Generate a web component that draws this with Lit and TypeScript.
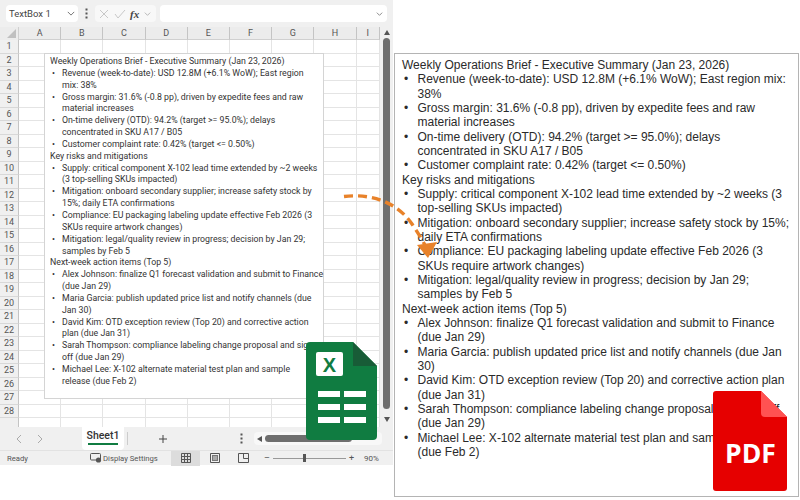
import { LitElement, html, css, svg } from "lit";
import { customElement } from "lit/decorators.js";

type Line = { t: string; b?: boolean };
const L: Line[] = [
  { t: "Weekly Operations Brief - Executive Summary (Jan 23, 2026)" },
  { t: "Revenue (week-to-date): USD 12.8M (+6.1% WoW); East region", b: true },
  { t: "mix: 38%" },
  { t: "Gross margin: 31.6% (-0.8 pp), driven by expedite fees and raw", b: true },
  { t: "material increases" },
  { t: "On-time delivery (OTD): 94.2% (target >= 95.0%); delays", b: true },
  { t: "concentrated in SKU A17 / B05" },
  { t: "Customer complaint rate: 0.42% (target <= 0.50%)", b: true },
  { t: "Key risks and mitigations" },
  { t: "Supply: critical component X-102 lead time extended by ~2 weeks", b: true },
  { t: "(3 top-selling SKUs impacted)" },
  { t: "Mitigation: onboard secondary supplier; increase safety stock by", b: true },
  { t: "15%; daily ETA confirmations" },
  { t: "Compliance: EU packaging labeling update effective Feb 2026 (3", b: true },
  { t: "SKUs require artwork changes)" },
  { t: "Mitigation: legal/quality review in progress; decision by Jan 29;", b: true },
  { t: "samples by Feb 5" },
  { t: "Next-week action items (Top 5)" },
  { t: "Alex Johnson: finalize Q1 forecast validation and submit to Finance", b: true },
  { t: "(due Jan 29)" },
  { t: "Maria Garcia: publish updated price list and notify channels (due", b: true },
  { t: "Jan 30)" },
  { t: "David Kim: OTD exception review (Top 20) and corrective action", b: true },
  { t: "plan (due Jan 31)" },
  { t: "Sarah Thompson: compliance labeling change proposal and sign-", b: true },
  { t: "off (due Jan 29)" },
  { t: "Michael Lee: X-102 alternate material test plan and sample", b: true },
  { t: "release (due Feb 2)" },
];

const R: Line[] = L.map((l) => ({ ...l }));
R[1] = { t: "Revenue (week-to-date): USD 12.8M (+6.1% WoW); East region mix:", b: true };
R[2] = { t: "38%" };
R[9] = { t: "Supply: critical component X-102 lead time extended by ~2 weeks (3", b: true };
R[10] = { t: "top-selling SKUs impacted)" };
R[11] = { t: "Mitigation: onboard secondary supplier; increase safety stock by 15%;", b: true };
R[12] = { t: "daily ETA confirmations" };
R[20] = { t: "Maria Garcia: publish updated price list and notify channels (due Jan", b: true };
R[21] = { t: "30)" };
R[22] = { t: "David Kim: OTD exception review (Top 20) and corrective action plan", b: true };
R[23] = { t: "(due Jan 31)" };
R[24] = { t: "Sarah Thompson: compliance labeling change proposal and sign-off", b: true };
R[25] = { t: "(due Jan 29)" };
R[26] = { t: "Michael Lee: X-102 alternate material test plan and sample release", b: true };
R[27] = { t: "(due Feb 2)" };

const COLS = ["A", "B", "C", "D", "E", "F", "G", "H", "I"];

@customElement("app-root")
export class AppRoot extends LitElement {
  static styles = css`
    :host { display: block; position: relative; width: 800px; height: 500px; background: #fff; overflow: hidden; font-family: Roboto, "Liberation Sans", sans-serif; color: #333; }
    .page { display: flex; width: 800px; height: 500px; align-items: flex-start; }
    .left { width: 393px; height: 465px; display: flex; flex-direction: column; background: #f0f0f0; flex: none; position: relative; }

    .fbar { height: 27px; display: flex; align-items: center; padding: 0 6px; flex: none; box-sizing: border-box; }
    .name { width: 72px; height: 17px; background: #fff; border-radius: 4px; display: flex; align-items: center; justify-content: space-between; padding: 0 3px; box-sizing: border-box; font-size: 9.5px; color: #444; }
    .vdots { width: 17px; display: flex; justify-content: center; }
    .fx { width: 61px; height: 17px; background: #f8f8f8; border-radius: 4px; display: flex; align-items: center; gap: 5px; padding: 0 4px; box-sizing: border-box; }
    .fxt { font-family: "Liberation Serif", serif; font-style: italic; font-weight: bold; font-size: 11px; color: #444; margin-left: -1px; }
    .formula { margin-left: 4px; width: 227px; height: 17px; background: #fff; border-radius: 4px; display: flex; align-items: center; justify-content: flex-end; padding-right: 4px; box-sizing: border-box; }

    .main { flex: 1; display: flex; min-height: 0; }
    .sheet { width: 380px; flex: none; overflow: hidden; display: grid; grid-template-columns: 19px repeat(8, 42.2px) 23.4px; grid-auto-rows: 13.5px; grid-template-rows: 13px; align-content: start; background: #fff; }
    .corner { background: #ececec; position: relative; border-right: 1px solid #d0d0d0; box-sizing: border-box; }
    .tri { position: absolute; right: 2px; bottom: 2px; width: 0; height: 0; border-left: 9px solid transparent; border-bottom: 9px solid #c0c0c0; }
    .ch { background: #ececec; border-right: 1px solid #c4c4c4; border-bottom: 1px solid #d0d0d0; font-size: 9px; text-align: center; line-height: 12px; color: #555; box-sizing: border-box; }
    .rh { background: #f0f0f0; border-right: 1px solid #c4c4c4; border-bottom: 1px solid #d8d8d8; font-size: 9px; text-align: center; line-height: 13px; color: #555; box-sizing: border-box; }
    .c { border-right: 1px solid #e4e4e4; border-bottom: 1px solid #e4e4e4; box-sizing: border-box; }
    .vs { flex: 1; position: relative; display: flex; flex-direction: column; align-items: center; padding-top: 3px; box-sizing: border-box; }
    .vthumb { width: 7px; height: 371px; margin-top: 3px; background: #6e6e6e; border-radius: 4px; }
    .arr { width: 0; height: 0; border-left: 3.5px solid transparent; border-right: 3.5px solid transparent; }
    .up { border-bottom: 5px solid #555; }
    .down { border-top: 5px solid #555; margin-top: 8px; }

    .box { position: absolute; left: 44px; top: 53px; width: 280px; height: 346px; background: #fff; border: 1px solid #d4d4d4; box-sizing: border-box; padding: 2px 5px; font-size: 8.78px; line-height: 11.85px; color: #333; white-space: nowrap; }
    .ln { display: block; height: 11.85px; }
    .ind { padding-left: 12px; position: relative; display: block; }
    .bul { position: absolute; left: 2px; }

    .tabs { height: 23px; flex: none; display: flex; align-items: center; position: relative; }
    .navs { width: 82px; display: flex; gap: 15px; padding-left: 16px; box-sizing: border-box; }
    .tab { width: 42px; height: 23px; background: #fff; border-radius: 0 0 4px 4px; font-size: 10.5px; font-weight: 500; color: #333; display: flex; flex-direction: column; align-items: center; padding-top: 2px; box-sizing: border-box; }
    .tab i { width: 30px; height: 1.5px; background: #107c41; margin-top: 1px; display: block; }
    .sep { width: 1px; height: 13px; background: #ccc; margin-left: 3px; }
    .plus { margin-left: 30px; width: 10px; }
    .tdots { margin-left: 66px; width: 14px; display: flex; justify-content: center; }
    .hs { margin-left: 6px; width: 128px; height: 13px; background: #f8f8f8; border-radius: 4px; display: flex; align-items: center; padding-left: 3px; gap: 3px; box-sizing: border-box; }
    .hl { width: 0; height: 0; border-top: 3px solid transparent; border-bottom: 3px solid transparent; border-right: 5px solid #555; }
    .hthumb { width: 87px; height: 7px; background: #6e6e6e; border-radius: 4px; }

    .status { height: 15px; flex: none; display: flex; align-items: center; border-top: 1px solid #e2e2e2; font-size: 7.7px; color: #555; box-sizing: border-box; }
    .ready { width: 90px; padding-left: 7px; box-sizing: border-box; }
    .ds { width: 81px; display: flex; align-items: center; gap: 1px; }
    .view { width: 29px; height: 15px; display: flex; align-items: center; justify-content: center; }
    .view.on { background: #dcdcdc; }
    .zoom { display: flex; align-items: center; margin-left: 6px; gap: 3px; font-size: 9px; }
    .track { width: 73px; height: 1px; background: #999; position: relative; }
    .knob { position: absolute; left: 30px; top: -3.5px; width: 3px; height: 8px; background: #555; }
    .pct { margin-left: 7px; font-size: 8px; }

    .right { margin: 53px 0 0 1px; width: 405px; height: 444px; border: 1.5px solid #b4b4b4; box-sizing: border-box; padding: 4px 7px; font-family: "Liberation Sans", Arial, sans-serif; font-size: 12px; line-height: 14.33px; color: #2a2a2a; white-space: nowrap; flex: none; }
    .right .ln { height: 14.33px; }
    .right .ind { padding-left: 15.5px; }

    .ov { position: absolute; display: block; left: 0; top: 0; }
  `;

  private lines(list: Line[]) {
    return list.map((l, i) => {
      const indent = l.b || (i > 0 && ![8, 17].includes(i));
      return html`<span class="ln ${indent ? "ind" : ""}">${l.b ? html`<span class="bul">•</span>` : ""}${l.t}</span>`;
    });
  }

  private chev(d: string, color = "#666", w = 10, h = 6) {
    return html`<svg width=${w} height=${h} viewBox="0 0 10 6"><path d=${d} fill="none" stroke=${color} stroke-width="1"/></svg>`;
  }

  private dots() {
    return html`<svg width="3" height="11" viewBox="0 0 3 11"><rect x="0.5" y="0.5" width="2" height="2" fill="#555"/><rect x="0.5" y="4.5" width="2" height="2" fill="#555"/><rect x="0.5" y="8.5" width="2" height="2" fill="#555"/></svg>`;
  }

  render() {
    const rows = Array.from({ length: 28 }, (_, i) => i + 1);
    return html`
      <div class="page">
        <div class="left">
          <div class="fbar">
            <div class="name"><span>TextBox 1</span>${this.chev("M1 1 L5 5 L9 1", "#555", 8, 5)}</div>
            <div class="vdots">${this.dots()}</div>
            <div class="fx">
              <svg width="10" height="10" viewBox="0 0 10 10"><path d="M1 1 L9 9 M9 1 L1 9" stroke="#c8c8c8" stroke-width="1" fill="none"/></svg>
              <svg width="12" height="10" viewBox="0 0 12 10"><path d="M1 5 L4 9 L11 1" stroke="#c8c8c8" stroke-width="1" fill="none"/></svg>
              <span class="fxt">fx</span>
              ${this.chev("M1 1 L5 5 L9 1", "#999", 7, 4)}
            </div>
            <div class="formula">${this.chev("M1 1 L5 5 L9 1", "#555", 7, 4)}</div>
          </div>
          <div class="main">
            <div class="sheet">
              <div class="corner"><div class="tri"></div></div>
              ${COLS.map((c) => html`<div class="ch">${c}</div>`)}
              ${rows.map((r) => html`<div class="rh">${r}</div>${COLS.map(() => html`<div class="c"></div>`)}`)}
              <div class="rh"></div>${COLS.map(() => html`<div class="c"></div>`)}
            </div>
            <div class="vs">
              <div class="arr up"></div>
              <div class="vthumb"></div>
              <div class="arr down"></div>
            </div>
          </div>
          <div class="tabs">
            <div class="navs">
              <svg width="6" height="10" viewBox="0 0 6 10"><path d="M5 1 L1 5 L5 9" fill="none" stroke="#aaa"/></svg>
              <svg width="6" height="10" viewBox="0 0 6 10"><path d="M1 1 L5 5 L1 9" fill="none" stroke="#aaa"/></svg>
            </div>
            <div class="tab"><span>Sheet1</span><i></i></div>
            <div class="sep"></div>
            <div class="plus"><svg width="10" height="10" viewBox="0 0 10 10"><path d="M5 1 V9 M1 5 H9" stroke="#444" stroke-width="1" fill="none"/></svg></div>
            <div class="tdots">${this.dots()}</div>
            <div class="hs"><div class="hl"></div><div class="hthumb"></div></div>
          </div>
          <div class="status">
            <div class="ready">Ready</div>
            <div class="ds">
              <svg width="12" height="10" viewBox="0 0 12 10"><rect x="0.5" y="0.5" width="10" height="6.5" rx="1" fill="none" stroke="#555"/><circle cx="8.5" cy="7" r="2.6" fill="#555"/></svg>
              <span>Display Settings</span>
            </div>
            <div class="view on"><svg width="10" height="10" viewBox="0 0 10 10"><path d="M0.5 0.5 H9.5 V9.5 H0.5 Z M3.5 0.5 V9.5 M6.5 0.5 V9.5 M0.5 3.5 H9.5 M0.5 6.5 H9.5" fill="none" stroke="#555"/></svg></div>
            <div class="view"><svg width="10" height="10" viewBox="0 0 10 10"><path d="M0.5 0.5 H9.5 V9.5 H0.5 Z" fill="none" stroke="#555"/><rect x="2.5" y="2.5" width="5" height="5" fill="#aaa" stroke="#777"/></svg></div>
            <div class="view"><svg width="11" height="10" viewBox="0 0 11 10"><path d="M0.5 0.5 H10.5 V9.5 H0.5 Z M5.5 0.5 V5.5 H10.5" fill="none" stroke="#555"/></svg></div>
            <div class="zoom">
              <span>–</span>
              <div class="track"><div class="knob"></div></div>
              <span>+</span>
              <span class="pct">90%</span>
            </div>
          </div>
          <div class="box">${this.lines(L)}</div>
        </div>
        <div class="right">${this.lines(R)}</div>
      </div>

      <svg class="ov" width="800" height="500" viewBox="0 0 800 500">
        ${svg`
          <path d="M344 196.5 C 372 193, 398 203, 412 224 C 418 233, 423 241, 426 247" fill="none" stroke="#E8822A" stroke-width="3.4" stroke-dasharray="9 5"/>
          <path d="M417 245 L437 242 L428 258 Z" fill="#E8822A"/>

          <path d="M310 342 H353 L377 366 V436 a4 4 0 0 1 -4 4 H310 a4 4 0 0 1 -4 -4 V346 a4 4 0 0 1 4 -4 Z" fill="#107C41"/>
          <path d="M353 342 L377 366 H353 Z" fill="#185C37"/>
          <rect x="316" y="352" width="27" height="24" rx="2" fill="#fff"/>
          <text x="329.5" y="372" text-anchor="middle" font-family="Liberation Sans, sans-serif" font-weight="bold" font-size="20" fill="#107C41">X</text>
          <g fill="#fff">
            <rect x="318" y="391" width="22" height="6"/><rect x="344" y="391" width="22" height="6"/>
            <rect x="318" y="404" width="22" height="6"/><rect x="344" y="404" width="22" height="6"/>
            <rect x="318" y="417" width="22" height="6"/><rect x="344" y="417" width="22" height="6"/>
          </g>

          <path d="M716 391 H761 L787 417 V488 a3 3 0 0 1 -3 3 H716 a3 3 0 0 1 -3 -3 V394 a3 3 0 0 1 3 -3 Z" fill="#E60000"/>
          <path d="M761 391 L787 417 H765 a4 4 0 0 1 -4 -4 Z" fill="#FF5252"/>
          <text x="750.5" y="463" text-anchor="middle" font-family="Open Sans, sans-serif" font-weight="bold" font-size="26.5" fill="#fff">PDF</text>
        `}
      </svg>
    `;
  }
}
